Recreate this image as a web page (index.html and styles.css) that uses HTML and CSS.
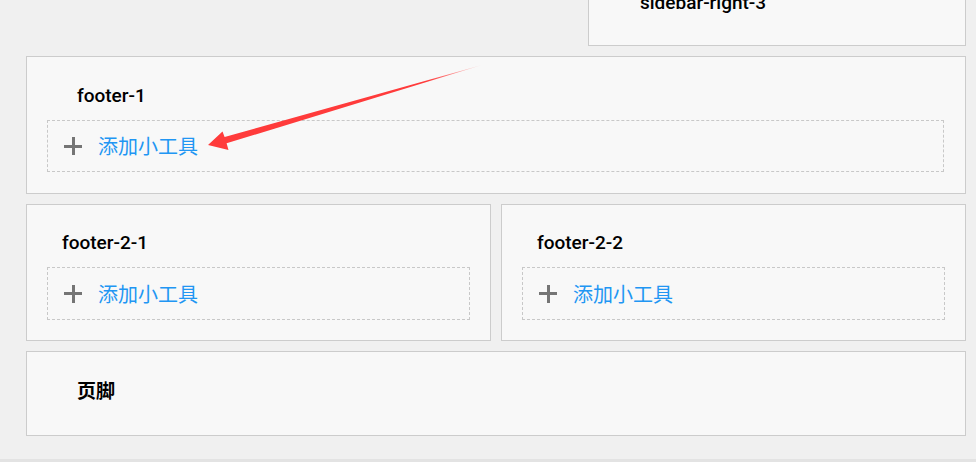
FILE: index.html
```html
<!DOCTYPE html>
<html lang="zh-CN">
<head>
<meta charset="utf-8">
<title>Widgets</title>
<link rel="stylesheet" href="styles.css">
</head>
<body>
<div class="page">
  <div class="top-row">
    <section class="panel sidebar">
      <h3 class="panel-title">sidebar-right-3</h3>
    </section>
  </div>

  <section class="panel wide">
    <h3 class="panel-title">footer-1</h3>
    <div class="drop">
      <span class="plus"></span>
      <a class="add-link">添加小工具</a>
    </div>
  </section>

  <div class="cols">
    <section class="panel half">
      <h3 class="panel-title">footer-2-1</h3>
      <div class="drop">
        <span class="plus"></span>
        <a class="add-link">添加小工具</a>
      </div>
    </section>
    <section class="panel half">
      <h3 class="panel-title">footer-2-2</h3>
      <div class="drop">
        <span class="plus"></span>
        <a class="add-link">添加小工具</a>
      </div>
    </section>
  </div>

  <section class="panel footer">
    <h3 class="panel-title cjk">页脚</h3>
  </section>

  <div class="bottom-line"></div>
</div>

<svg class="annotation" width="976" height="462" viewBox="0 0 976 462" aria-hidden="true">
  <defs>
    <linearGradient id="fade" x1="208" y1="145" x2="482" y2="65" gradientUnits="userSpaceOnUse">
      <stop offset="0" stop-color="#ff3b3b"/>
      <stop offset="0.8" stop-color="#ff3b3b"/>
      <stop offset="1" stop-color="#ff3b3b" stop-opacity="0.15"/>
    </linearGradient>
  </defs>
  <polygon fill="url(#fade)" points="208,145 222.5,131.5 224.6,137 482,65 226.6,143.3 228.5,150"/>
</svg>
</body>
</html>
```

FILE: styles.css
```css
html, body {
  margin: 0;
  padding: 0;
}

body {
  background: #f0f0f0;
  font-family: Roboto, "Noto Sans CJK SC", sans-serif;
  color: #111;
  width: 976px;
  height: 462px;
  overflow: hidden;
  position: relative;
}

.page {
  display: flex;
  flex-direction: column;
  gap: 10px;
  padding: 0 10px 0 26px;
}

.top-row {
  display: flex;
  justify-content: flex-end;
  margin-top: -40px;
}

.panel {
  background: #f8f8f8;
  border: 1px solid #cccccc;
  box-sizing: border-box;
}

.panel-title {
  margin: 0;
  font-size: 19px;
  font-weight: 500;
  line-height: 24px;
  color: #000;
}

.sidebar {
  width: 378px;
  height: 86px;
  padding: 30px 20px 0 51px;
}

.wide {
  padding: 27px 21px 21px 20px;
}

.wide .panel-title {
  margin-left: 30px;
  margin-bottom: 12px;
}

.cols {
  display: flex;
  gap: 10px;
}

.half {
  flex: 1;
  padding: 26px 20px 20px 20px;
}

.half .panel-title {
  margin-left: 15px;
  margin-bottom: 12px;
}

.drop {
  border: 1px dashed #c8c8c8;
  height: 52px;
  box-sizing: border-box;
  display: flex;
  align-items: center;
  padding-left: 16px;
  gap: 16px;
}

.half .drop {
  height: 53px;
}

.plus {
  position: relative;
  width: 18px;
  height: 18px;
  flex: none;
}

.plus::before,
.plus::after {
  content: "";
  position: absolute;
  background: #757575;
}

.plus::before {
  left: 0;
  right: 0;
  top: 7.5px;
  height: 3px;
}

.plus::after {
  top: 0;
  bottom: 0;
  left: 7.5px;
  width: 3px;
}

.add-link {
  font-family: "Noto Sans CJK SC", sans-serif;
  font-size: 20px;
  line-height: 24px;
  color: #2196f3;
  cursor: pointer;
}

.footer {
  height: 85px;
  padding: 26px 20px 0 50px;
}

.panel-title.cjk {
  font-family: "Noto Sans CJK SC", sans-serif;
  font-size: 19px;
  font-weight: 700;
}

.bottom-line {
  margin-top: 13px;
  margin-left: -26px;
  margin-right: -10px;
  border-top: 3px solid #e3e3e3;
}

.annotation {
  position: absolute;
  left: 0;
  top: 0;
  pointer-events: none;
}
```
